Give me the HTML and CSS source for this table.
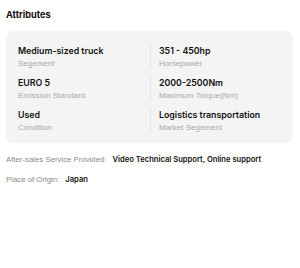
FILE: index.html
```html
<!DOCTYPE html>
<html lang="en">
<head>
<meta charset="utf-8">
<title>Attributes</title>
<link rel="stylesheet" href="styles.css">
</head>
<body>
<section class="attrs">
  <h2 class="attrs-title">Attributes</h2>
  <div class="attrs-card">
    <div class="attr">
      <div class="attr-value">Medium-sized truck</div>
      <div class="attr-label">Segement</div>
    </div>
    <div class="attr attr-right">
      <div class="attr-value">351 - 450hp</div>
      <div class="attr-label">Horsepower</div>
    </div>
    <div class="attr">
      <div class="attr-value">EURO 5</div>
      <div class="attr-label">Emission Standard</div>
    </div>
    <div class="attr attr-right">
      <div class="attr-value">2000-2500Nm</div>
      <div class="attr-label">Maximum Torque(Nm)</div>
    </div>
    <div class="attr">
      <div class="attr-value">Used</div>
      <div class="attr-label">Condition</div>
    </div>
    <div class="attr attr-right">
      <div class="attr-value">Logistics transportation</div>
      <div class="attr-label">Market Segement</div>
    </div>
  </div>
  <div class="info-row">
    <span class="info-key">After-sales Service Provided:</span>
    <span class="info-val">Video Technical Support, Online support</span>
  </div>
  <div class="info-row">
    <span class="info-key">Place of Origin:</span>
    <span class="info-val">Japan</span>
  </div>
</section>
</body>
</html>
```

FILE: styles.css
```css
* { box-sizing: border-box; }

body {
  margin: 0;
  background: #fff;
  color: #111;
  font-family: Inter, "Noto Sans", sans-serif;
}

.attrs {
  padding: 8px 7px 0 6px;
}

.attrs-title {
  margin: 0;
  font-size: 9.2px;
  line-height: 14px;
  font-weight: 700;
}

.attrs-card {
  margin-top: 9px;
  background: #f4f4f4;
  border-radius: 7px;
  padding: 13px 12px 10px 12px;
  display: grid;
  grid-template-columns: 132px 1fr;
  row-gap: 7px;
}

.attr-right {
  border-left: 1px solid #e4e4e4;
  padding-left: 8px;
}

.attr-value {
  font-size: 8.8px;
  line-height: 13px;
  font-weight: 600;
  white-space: nowrap;
}

.attr-label {
  margin-top: 1px;
  font-size: 8px;
  line-height: 11px;
  color: #a8a8a8;
  font-family: "Liberation Sans", Arial, sans-serif;
}

.info-row {
  display: flex;
  gap: 6px;
  font-size: 7.8px;
  line-height: 12px;
  margin-top: 11px;
  white-space: nowrap;
}

.info-row + .info-row {
  margin-top: 8px;
}

.info-key {
  color: #8a8a8a;
  font-family: "Liberation Sans", Arial, sans-serif;
}

.info-val {
  font-size: 7.6px;
  font-weight: 600;
}
```
